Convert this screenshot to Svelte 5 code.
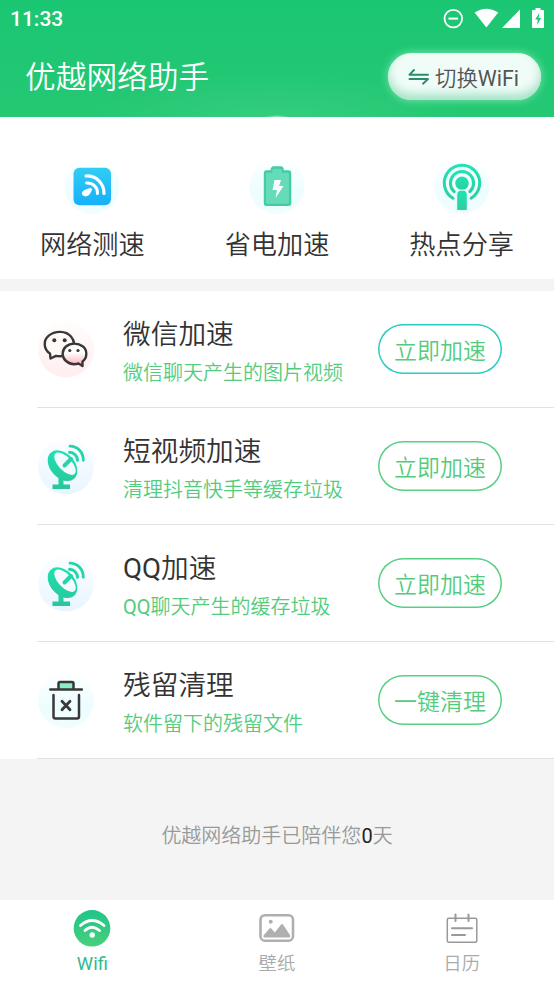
<script>
  const tools = [
    { icon: 'speed', label: '网络测速' },
    { icon: 'battery', label: '省电加速' },
    { icon: 'hotspot', label: '热点分享' }
  ]

  const items = [
    { icon: 'wechat', app: '', title: '微信加速', desc: '微信聊天产生的图片视频', action: '立即加速' },
    { icon: 'dish', app: '', title: '短视频加速', desc: '清理抖音快手等缓存垃圾', action: '立即加速' },
    { icon: 'dish', app: 'QQ', title: '加速', desc: '聊天产生的缓存垃圾', action: '立即加速' },
    { icon: 'trash', app: '', title: '残留清理', desc: '软件留下的残留文件', action: '一键清理' }
  ]

  let days = 0
  let tab = 'wifi'
</script>

<svg class="defs" width="0" height="0">
  <defs>
    <linearGradient id="blue" x1="0" y1="0" x2="0" y2="1">
      <stop offset="0" stop-color="#30cdf4" />
      <stop offset="1" stop-color="#16b0fb" />
    </linearGradient>
    <linearGradient id="teal" x1="0" y1="0" x2="0" y2="1">
      <stop offset="0" stop-color="#1ee3b4" />
      <stop offset="1" stop-color="#2ccf9d" />
    </linearGradient>
    <linearGradient id="dish" x1="0" y1="0" x2="1" y2="1">
      <stop offset="0" stop-color="#19e8b9" />
      <stop offset="1" stop-color="#2bc696" />
    </linearGradient>
    <linearGradient id="pink" x1="0" y1="0" x2="0" y2="1">
      <stop offset="0.4" stop-color="#fff" />
      <stop offset="1" stop-color="#ffaab0" />
    </linearGradient>
    <linearGradient id="green" x1="0" y1="0" x2="0" y2="1">
      <stop offset="0" stop-color="#1fc588" />
      <stop offset="1" stop-color="#48cf7b" />
    </linearGradient>
    <linearGradient id="haloCyan" x1="0" y1="0" x2="0" y2="1">
      <stop offset="0" stop-color="#fdffff" />
      <stop offset="0.6" stop-color="#edfdff" />
      <stop offset="1" stop-color="#f1fdff" />
    </linearGradient>
    <linearGradient id="haloBlue" x1="0" y1="0" x2="0" y2="1">
      <stop offset="0" stop-color="#fdfeff" />
      <stop offset="1" stop-color="#e8f5ff" />
    </linearGradient>
    <linearGradient id="haloPink" x1="0" y1="0" x2="0" y2="1">
      <stop offset="0" stop-color="#fffdfd" />
      <stop offset="1" stop-color="#ffeeee" />
    </linearGradient>
  </defs>
</svg>

<div class="app">
  <header>
    <div class="status">
      <span class="time">11:33</span>
      <svg width="104" height="24" viewBox="442 6 104 24">
        <circle cx="453.3" cy="18.6" r="8.8" fill="none" stroke="#fff" stroke-width="1.8" />
        <path d="M448.5 18.6h9.6" stroke="#fff" stroke-width="2" />
        <path d="M474.6 12.6Q486.3 5 498.2 12.6L486.4 27.4z" fill="#fff" />
        <path d="M520 9.6V28h-18z" fill="#fff" />
        <path d="M533 10h2.5V8h5v2h2.5q1 0 1 1v16q0 1-1 1h-10q-1 0-1-1V11q0-1 1-1z" fill="#fff" />
        <path d="M539.5 12.5l-4.3 7h2.6l-.8 5.7 4.1-7.2h-2.5z" fill="#1ec772" />
      </svg>
    </div>
    <div class="bar">
      <h1>优越网络助手</h1>
      <button class="switch">
        <svg width="22" height="16" viewBox="0 0 22 16" fill="none" stroke="#2b8b6d" stroke-width="1.9" stroke-linecap="round" stroke-linejoin="round">
          <path d="M6 1L1.5 5.7H20M1.5 10H20L15 14.7" />
        </svg>
        <span>切换<span class="latin">WiFi</span></span>
      </button>
    </div>
  </header>

  <section class="tools">
    {#each tools as tool}
      <div class="tool">
        <svg width="56" height="58" viewBox="0 0 56 58">
          <circle cx="28" cy="28.5" r="27.5" fill="url(#haloCyan)" />
          {#if tool.icon === 'speed'}
            <rect x="9.5" y="9.7" width="37.5" height="37.5" rx="6" fill="url(#blue)" />
            <g fill="none" stroke="#fff" stroke-linecap="round">
              <path d="M22 18C32 17.5 40 25 40 35.5" stroke-width="3.2" />
              <path d="M22.5 25C29 24.8 33.8 29.3 33.5 35.5" stroke-width="3" />
            </g>
            <path d="M27 30Q28.8 31 27 34Q25 38.5 21.2 38.4Q17.3 37.5 18 34.3Q19.5 31.5 27 30z" fill="#fff" />
          {:else if tool.icon === 'battery'}
            <path d="M17.5 12.3H21.5q.4-4 3-4h7.5q2.400 0 3 4h4.3q3 0 3 3v30q0 2.700-3 2.700H17.5q-2.700 0-2.700-2.700v-30q0-3 2.700-3z" fill="#42cda3" />
            <path d="M18 14.700h5q0-4 2-4h6q2 0 2 4h5.500q1.500 0 1.500 1.500v28q0 1.500-1.500 1.500H18.500q-1.500 0-1.500-1.500v-28Q17 14.700 18 14.700z" fill="#66dbb9" />
            <path d="M25.500 22h6.500l-2 6h4.500l-8 12 1.500-8h-4.500z" fill="#fff" />
          {:else}
            <g fill="none" stroke="url(#teal)" stroke-linecap="round">
              <path d="M19 40.200A17.700 17.700 0 1 1 37 40.200" stroke-width="3" />
              <path d="M20.200 33.700A11.600 11.600 0 1 1 35.800 33.700" stroke-width="3" />
            </g>
            <circle cx="28" cy="25.200" r="6.700" fill="url(#teal)" />
            <path d="M22.700 52.500V37q0-5 5.300-5t5.300 5v15.500z" fill="url(#teal)" stroke="#f0fdff" stroke-width="1" />
          {/if}
        </svg>
        <span>{tool.label}</span>
      </div>
    {/each}
  </section>

  <section class="list">
    {#each items as item, i}
      <div class="item">
        <svg width="58" height="58" viewBox="0 0 58 58">
          {#if item.icon === 'wechat'}
            <circle cx="29" cy="29.5" r="28" fill="url(#haloPink)" />
            <path d="M13 33.500C6.500 29.500 6 20.500 11.500 15.800C18 10.300 29 10.500 34 16.500C38 21 38 27 34 31.500C30.500 35.500 24 37 19 35.800L13.500 38.500z" fill="#fff9f8" stroke="#383838" stroke-width="2.400" stroke-linejoin="round" />
            <path d="M45.500 41.500C50.500 38 50.500 30 46 26.500C41 22.700 33.500 22.700 29 26.500C24.500 30.500 24.500 37 29 41C32.500 44 37.500 44.800 41.500 43.500L45.500 46z" fill="url(#pink)" stroke="#383838" stroke-width="2.400" stroke-linejoin="round" />
            <g fill="#383838">
              <circle cx="17.300" cy="20.200" r="2" />
              <circle cx="27.700" cy="20.200" r="2" />
              <circle cx="32.800" cy="30.500" r="1.600" />
              <circle cx="41" cy="30.500" r="1.600" />
            </g>
          {:else if item.icon === 'dish'}
            <circle cx="29" cy="29.5" r="28" fill="url(#haloBlue)" />
            <path d="M21.500 40h5v9h-5z" fill="#24cf9f" />
            <rect x="15.500" y="47.500" width="17.500" height="4.500" fill="#2ac898" />
            <ellipse cx="25.500" cy="28.700" rx="17.500" ry="12.200" transform="rotate(48 25.500 28.700)" fill="url(#dish)" />
            <ellipse cx="28" cy="26.700" rx="14" ry="6.600" transform="rotate(47 28 26.700)" fill="#f4faff" />
            <g fill="none" stroke="#23d5a8" stroke-linecap="round">
              <path d="M27.500 28.500l6.500-6.500" stroke-width="4" />
              <path d="M32.500 15.300C37 15.300 40.500 19 40.500 23.300" stroke-width="3" />
              <path d="M33 9.200C40.500 9.200 46.500 15.500 46.300 23.300" stroke-width="2.800" />
            </g>
          {:else}
            <circle cx="29" cy="29.5" r="28" fill="url(#haloCyan)" />
            <path d="M21 18.500V11h15.500v7.500z" fill="#8becc5" />
            <g fill="none" stroke="#383838" stroke-width="2.500" stroke-linecap="round" stroke-linejoin="round">
              <path d="M13.300 18.500h31.500M21.500 18.500v-6q0-1.500 1.500-1.500h12q1.500 0 1.500 1.500v6M16.500 24v21.500q0 2 2 2H40q2 0 2-2V24" />
              <path d="M25 30.200l8 8.500M33 30.200l-8 8.500" stroke-width="2.800" />
            </g>
          {/if}
        </svg>
        <div class="text">
          <h2><span class="latin">{item.app}</span>{item.title}</h2>
          <p><span class="latin">{item.app}</span>{item.desc}</p>
        </div>
        <button class="action" class:first={i === 0}>{item.action}</button>
      </div>
    {/each}
  </section>

  <div class="days">优越网络助手已陪伴您<b>{days}</b>天</div>

  <nav>
    <div class="tab" class:active={tab === 'wifi'}>
      <svg width="38" height="38" viewBox="0 0 38 38">
        <circle cx="19" cy="19.3" r="18.3" fill="url(#green)" />
        <g fill="none" stroke="#fff" stroke-width="2.8" stroke-linecap="round">
          <path d="M7.5 16.5Q19 6.5 31 16.5" />
          <path d="M12 21.5Q19 15 26.5 21.5" />
        </g>
        <circle cx="19.2" cy="26" r="2.7" fill="#fff" />
      </svg>
      <span class="latin">Wifi</span>
    </div>
    <div class="tab" class:active={tab === 'wallpaper'}>
      <svg width="38" height="38" viewBox="0 0 38 38">
        <rect x="2.5" y="6.2" width="32.5" height="25.5" rx="4.5" fill="none" stroke="#afafaf" stroke-width="2.6" />
        <circle cx="12.7" cy="12.7" r="2" fill="#afafaf" />
        <path d="M5.500 28.500v-2l6-7q.9-1 1.800 0l3.500 4 6.300-8q1-1 1.900 0l7 10.500v2.500z" fill="#afafaf" />
      </svg>
      <span>壁纸</span>
    </div>
    <div class="tab" class:active={tab === 'calendar'}>
      <svg width="38" height="38" viewBox="0 0 38 38" fill="none" stroke="#999" stroke-linecap="round">
        <rect x="4.3" y="9.3" width="29.5" height="24" rx="1.5" stroke-width="1.5" />
        <path d="M12.5 5.5v6.500M25.5 5.500v6.500" stroke-width="2" />
        <path d="M9 19.300h20M9 26h13" stroke-width="2" />
      </svg>
      <span>日历</span>
    </div>
  </nav>
</div>

<style>
  :global(body) {
    margin: 0;
    background: #f4f4f4;
  }
  .defs {
    position: absolute;
  }
  .app {
    display: flex;
    flex-direction: column;
    width: 554px;
    height: 985px;
    overflow: hidden;
    font-family: Roboto, "Noto Sans CJK SC", sans-serif;
    font-weight: 350;
    color: #333;
    background: #f4f4f4;
  }
  h1, h2, p {
    margin: 0;
    font-weight: 350;
  }
  button {
    box-sizing: border-box;
    padding: 0;
    font-family: inherit;
    font-weight: 350;
  }
  svg {
    display: block;
    flex: none;
  }
  .latin {
    font-weight: 400;
  }
  header {
    height: 117px;
    color: #fff;
    background:
      radial-gradient(ellipse 12px 2px at 277px 117px, rgba(230, 255, 240, 0.6), transparent),
      radial-gradient(ellipse 190px 50px at 277px 122px, rgba(70, 210, 138, 0.5), transparent),
      linear-gradient(#1bc673, #25c873);
  }
  .status {
    display: flex;
    justify-content: space-between;
    height: 38px;
    padding: 0 8px 0 10px;
  }
  .status svg {
    margin-top: 6px;
  }
  .time {
    font-size: 21px;
    font-weight: 500;
    line-height: 38px;
  }
  .bar {
    display: flex;
    align-items: center;
    justify-content: space-between;
    height: 77px;
    padding: 0 13px 0 25px;
  }
  h1 {
    padding-top: 3px;
    font-size: 30.7px;
    line-height: 40px;
  }
  .switch {
    display: flex;
    align-items: center;
    gap: 5px;
    width: 153px;
    height: 47px;
    padding-left: 20px;
    border: 0;
    border-radius: 24px;
    font-size: 21.4px;
    color: #555;
    background: #f0fcf7;
    box-shadow: 0 0 9px rgba(190, 255, 220, 0.6), inset 0 -6px 10px #a6e2c7;
  }
  .tools {
    display: flex;
    height: 162px;
    background: #fff;
  }
  .tool {
    display: flex;
    flex: 1;
    flex-direction: column;
    align-items: center;
    padding-top: 41px;
    font-size: 26.2px;
    line-height: 38px;
  }
  .tool span {
    margin-top: 10px;
  }
  .list {
    margin-top: 12px;
    background: #fff;
  }
  .item {
    display: flex;
    align-items: center;
    box-sizing: border-box;
    height: 117px;
    margin-left: 37px;
    padding-right: 52px;
    border-bottom: 1px solid #e2e2e2;
  }
  .text {
    flex: 1;
    padding-top: 5px;
    margin-left: 28px;
    white-space: nowrap;
  }
  h2 {
    font-size: 27.7px;
    line-height: 40px;
  }
  p {
    margin-top: 2px;
    font-size: 20px;
    line-height: 32px;
    color: #53cc7d;
  }
  .action {
    width: 124px;
    height: 50px;
    padding-bottom: 1px;
    border: 0;
    border-radius: 25px;
    font-size: 23px;
    color: #53cc7d;
    background: #fff;
    box-shadow: inset 0 0 0 1.5px #58cf83;
  }
  .action.first {
    box-shadow: inset 0 0 0 1.5px #2accc2;
  }
  .days {
    flex: 1;
    padding-top: 62px;
    font-size: 20px;
    line-height: 30px;
    text-align: center;
    color: #999;
  }
  b {
    font-weight: 400;
    color: #222;
  }
  nav {
    display: flex;
    height: 85px;
    background: #fff;
  }
  .tab {
    display: flex;
    flex: 1;
    flex-direction: column;
    align-items: center;
    padding-top: 9px;
    font-size: 18.4px;
    line-height: 28px;
    color: #aaa;
  }
  .tab span {
    margin-top: 3px;
  }
  .active {
    color: #2bbd8d;
  }
</style>
